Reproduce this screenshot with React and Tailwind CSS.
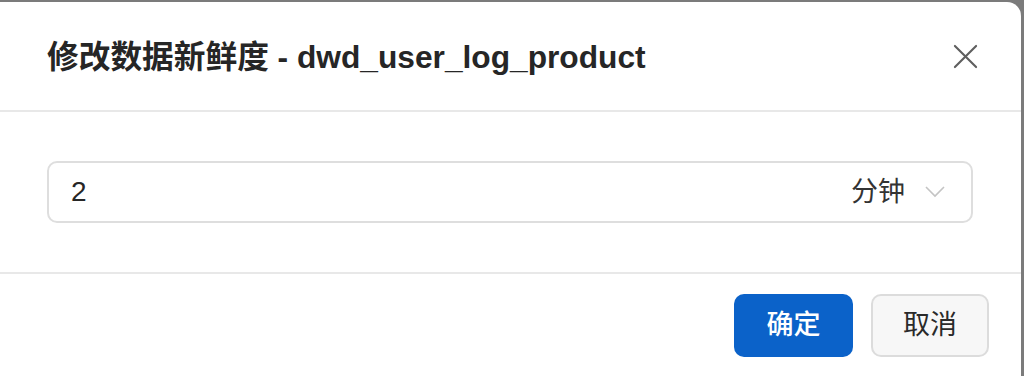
import { useState } from 'react';

const FONT = '"Liberation Sans", "Noto Sans CJK SC", sans-serif';

const App = () => {
  const [value, setValue] = useState('2');

  return (
    <div className="w-[1024px] h-[376px] overflow-hidden bg-[#7b7b7b] pt-[2px] pr-[3px]" style={{ fontFamily: FONT }}>
      <div className="h-full bg-white rounded-tr-[14px] flex flex-col">
        {/* 标题栏 */}
        <div className="h-[110px] shrink-0 flex items-center justify-between pl-[47px] pr-[41px] pt-[3px] border-b-2 border-[#e8e8e8]">
          <h1 className="text-[31.7px] font-semibold text-[#262626]">
            修改数据新鲜度 - dwd_user_log_product
          </h1>
          <button className="w-[30px] h-[30px] flex items-center justify-center text-[#5f5f5f] -mt-[3px]">
            <svg width="25" height="25" viewBox="0 0 26 26" fill="none" stroke="currentColor" strokeWidth="2.2" strokeLinecap="round">
              <path d="M2 2L24 24M24 2L2 24" />
            </svg>
          </button>
        </div>

        {/* 内容 */}
        <div className="h-[162px] shrink-0 flex items-center pl-[47px] pr-[48px] border-b-2 border-[#e8e8e8]">
          <div className="w-full h-[62px] border-2 border-[#dedede] rounded-[10px] flex items-center pl-[22px] pr-[26px]">
            <input
              className="flex-1 outline-none text-[28px] text-[#262626] bg-transparent"
              value={value}
              onChange={(e) => setValue(e.target.value)}
            />
            <span className="text-[27px] text-[#333] mr-[20px]">分钟</span>
            <svg width="20" height="12" viewBox="0 0 20 12" fill="none" stroke="#c4c4c4" strokeWidth="1.6">
              <path d="M1 1L10 10L19 1" />
            </svg>
          </div>
        </div>

        {/* 底部按钮 */}
        <div className="flex justify-end gap-[18px] pt-[20px] pr-[32px]">
          <button className="w-[119px] h-[63px] rounded-[10px] bg-[#0b62c9] text-white text-[27px] font-medium">
            确定
          </button>
          <button className="w-[118px] h-[63px] rounded-[10px] bg-[#f7f7f7] border-2 border-[#dcdcdc] text-[#2a2a2a] text-[27px]">
            取消
          </button>
        </div>
      </div>
    </div>
  );
};

export default App;
